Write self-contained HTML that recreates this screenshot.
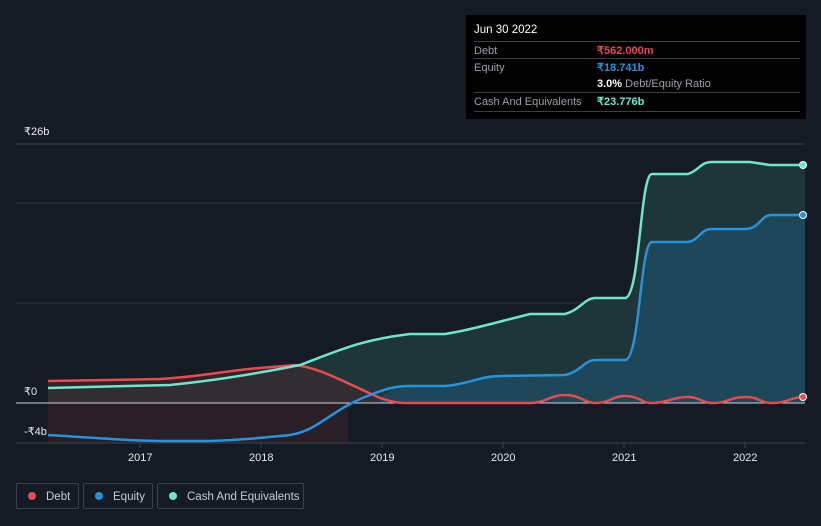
<!DOCTYPE html>
<html><head><style>
body{margin:0;background:#151b24;font-family:"Liberation Sans",sans-serif;}
.wrap{position:relative;width:821px;height:526px;overflow:hidden;background:#151b24;}
.tt{position:absolute;left:466px;top:15px;width:340px;height:104px;background:#000;color:#fff;font-size:11px;}
.tt .r{position:absolute;left:8px;right:6px;border-top:1px solid #3a3f46;height:18px;line-height:18px;}
.lab{color:#9aa0a6;}
.v{position:absolute;left:123px;top:0;font-weight:bold;}
.leg{position:absolute;top:483px;height:26px;border:1px solid #3b414a;border-radius:2px;color:#c8ccd2;font-size:11.5px;line-height:26px;box-sizing:border-box;white-space:nowrap;}
.dot{display:inline-block;width:8px;height:8px;border-radius:50%;margin:0 10px 0 11px;vertical-align:-0px;}
</style></head><body><div class="wrap">
<svg width="821" height="526" style="position:absolute;left:0;top:0">
<line x1="16" y1="144" x2="805" y2="144" stroke="#3a404a"/>
<line x1="16" y1="203" x2="805" y2="203" stroke="#2a3038"/>
<line x1="16" y1="303" x2="805" y2="303" stroke="#2a3038"/>
<rect x="48" y="403" width="300" height="40" fill="#2a1f27"/>
<path d="M48,388 L170,385 C220,380 260,373 300,365 C340,350 360,340 410,334 L445,334 C470,330 490,324 530,314 L565,314 C580,310 585,298 595,298 L625,298 C640,298 640,174 652,174 L688,174 C700,170 700,162 712,162 L750,162 L770,165 L805,165 L805,403 L48,403Z" fill="#1f3a3a" fill-opacity="0.9"/>
<path d="M380,403 C380,395 390,388 410,386 L445,386 C470,384 480,376 500,376 L565,375 C580,372 585,360 595,360 L625,360 C640,360 640,242 652,242 L688,242 C700,240 700,229 712,229 L745,229 C760,229 760,215 772,215 L805,215 L805,403Z" fill="#1f4a5e" fill-opacity="0.85"/>
<path d="M48,381 L160,379 C200,377 230,370 260,368 L295,365 C320,368 340,380 380,398 L380,403 L48,403Z" fill="#3a2a30" fill-opacity="0.7"/>
<line x1="16" y1="403" x2="805" y2="403" stroke="#cfd3d8" stroke-width="1"/>
<line x1="16" y1="443" x2="805" y2="443" stroke="#3a404a"/>
<line x1="140" y1="443" x2="140" y2="448" stroke="#3a404a"/><line x1="261" y1="443" x2="261" y2="448" stroke="#3a404a"/><line x1="382" y1="443" x2="382" y2="448" stroke="#3a404a"/><line x1="503" y1="443" x2="503" y2="448" stroke="#3a404a"/><line x1="624" y1="443" x2="624" y2="448" stroke="#3a404a"/><line x1="745" y1="443" x2="745" y2="448" stroke="#3a404a"/>
<path d="M48,381 L160,379 C200,377 230,370 260,368 L295,365 C320,368 340,380 380,398 C395,403 400,403 410,403 L530,403 C545,403 550,395 565,395 C580,395 585,403 595,403 C610,403 612,396 625,396 C640,396 640,403 652,403 C668,403 672,397 688,397 C700,397 702,403 712,403 C728,403 730,397 745,397 C760,397 760,403 772,403 C788,403 790,397 805,397" fill="none" stroke="#e84a4f" stroke-width="2.5"/>
<path d="M48,435 C100,438 130,441 170,441 L210,441 C240,440 260,438 290,435 C320,430 330,410 370,395 C385,389 395,386 410,386 L445,386 C470,384 480,376 500,376 L565,375 C580,372 585,360 595,360 L625,360 C640,360 640,242 652,242 L688,242 C700,240 700,229 712,229 L745,229 C760,229 760,215 772,215 L805,215" fill="none" stroke="#2394e0" stroke-width="2.5"/>
<path d="M48,388 L170,385 C220,380 260,373 300,365 C340,350 360,340 410,334 L445,334 C470,330 490,324 530,314 L565,314 C580,310 585,298 595,298 L625,298 C640,298 640,174 652,174 L688,174 C700,170 700,162 712,162 L750,162 L770,165 L805,165" fill="none" stroke="#6de5cf" stroke-width="2.5"/>
<circle cx="803" cy="165" r="3.5" fill="#6de5cf" stroke="#fff"/>
<circle cx="803" cy="215" r="3.5" fill="#2394e0" stroke="#fff"/>
<circle cx="803" cy="397" r="3.5" fill="#e84a4f" stroke="#fff"/>
<g fill="#e6e8eb" font-size="11" font-family="Liberation Sans,sans-serif">
<text x="24" y="135">₹26b</text><text x="24" y="395">₹0</text><text x="24" y="435">-₹4b</text>
<text x="128" y="461">2017</text><text x="249" y="461">2018</text><text x="370" y="461">2019</text><text x="491" y="461">2020</text><text x="612" y="461">2021</text><text x="733" y="461">2022</text>
</g>
</svg>
<div class="tt">
<div style="position:absolute;left:8px;top:9px;font-size:11.5px">Jun 30 2022</div>
<div class="r" style="top:26px"><span class="lab">Debt</span><span class="v" style="color:#e84a4f">₹562.000m</span></div>
<div class="r" style="top:43px"><span class="lab">Equity</span><span class="v" style="color:#2394e0">₹18.741b</span></div>
<div class="r" style="top:60px;border-top:none"><span class="v" style="color:#fff">3.0% <span style="font-weight:normal;color:#9aa0a6">Debt/Equity Ratio</span></span></div>
<div class="r" style="top:77px"><span class="lab">Cash And Equivalents</span><span class="v" style="color:#6de5cf">₹23.776b</span></div>
<div class="r" style="top:96px;height:0"></div>
</div>
<div class="leg" style="left:16px;width:63px"><span class="dot" style="background:#e84a4f"></span>Debt</div>
<div class="leg" style="left:83px;width:70px"><span class="dot" style="background:#2394e0"></span>Equity</div>
<div class="leg" style="left:157px;width:147px"><span class="dot" style="background:#6de5cf"></span>Cash And Equivalents</div>
</div></body></html>
